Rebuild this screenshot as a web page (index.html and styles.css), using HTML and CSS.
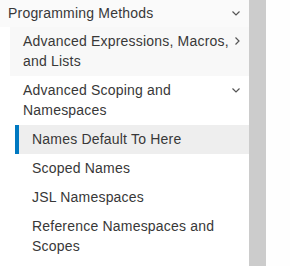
FILE: index.html
```html
<!DOCTYPE html>
<html lang="en">
<head>
    <meta charset="UTF-8">
    <meta name="viewport" content="width=device-width, initial-scale=1.0">
    <title>Contents</title>
    <link rel="stylesheet" href="styles.css">
</head>
<body>
    <div class="layout">
        <nav class="toc">
            <div class="toc-item level1 open">
                <span class="label">Programming Methods</span>
                <svg class="chev down" width="8" height="5" viewBox="0 0 8 5"><path d="M0.5 0.5 L4 4 L7.5 0.5" fill="none" stroke="#555" stroke-width="1.2"/></svg>
            </div>
            <div class="toc-item level2 shaded">
                <span class="label">Advanced Expressions, Macros, and Lists</span>
                <svg class="chev right" width="5" height="8" viewBox="0 0 5 8"><path d="M0.5 0.5 L4 4 L0.5 7.5" fill="none" stroke="#555" stroke-width="1.2"/></svg>
            </div>
            <div class="toc-item level2 open">
                <span class="label">Advanced Scoping and Namespaces</span>
                <svg class="chev down" width="8" height="5" viewBox="0 0 8 5"><path d="M0.5 0.5 L4 4 L7.5 0.5" fill="none" stroke="#555" stroke-width="1.2"/></svg>
            </div>
            <div class="toc-item level3 current">
                <span class="label">Names Default To Here</span>
            </div>
            <div class="toc-item level3">
                <span class="label">Scoped Names</span>
            </div>
            <div class="toc-item level3">
                <span class="label">JSL Namespaces</span>
            </div>
            <div class="toc-item level3">
                <span class="label">Reference Namespaces and Scopes</span>
            </div>
        </nav>
        <div class="scroll-track"></div>
        <div class="page"></div>
    </div>
</body>
</html>
```

FILE: styles.css
```css
body {
    margin: 0;
    font-family: "Liberation Sans", Arial, sans-serif;
    font-size: 14px;
    letter-spacing: 0.2px;
    color: #383838;
    background: #fff;
}
.layout {
    display: flex;
    height: 266px;
    overflow: hidden;
}
.toc {
    width: 249px;
    flex: none;
}
.scroll-track {
    width: 17px;
    flex: none;
    background: #cccccc;
}
.page {
    flex: 1;
    background: #fefefe;
}
.toc-item {
    display: flex;
    align-items: flex-start;
    line-height: 20px;
    padding: 4px 9px 5px 0;
}
.toc-item .label {
    flex: 1;
}
.toc-item .chev {
    flex: none;
    margin-left: 4px;
}
.chev.down {
    margin-top: 8px;
}
.chev.right {
    margin-top: 6px;
}
.level1 {
    padding-top: 3px;
    padding-bottom: 4px;
    padding-left: 8px;
    background: #fafafa;
}
.level2 {
    margin-left: 10px;
    padding-left: 13px;
}
.level2.shaded {
    background: #f8f8f8;
}
.level3 {
    margin-left: 15px;
    padding-left: 17px;
}
.current {
    background: #eeeeee;
    border-left: 4px solid #0079c1;
    padding-left: 13px;
}
```
